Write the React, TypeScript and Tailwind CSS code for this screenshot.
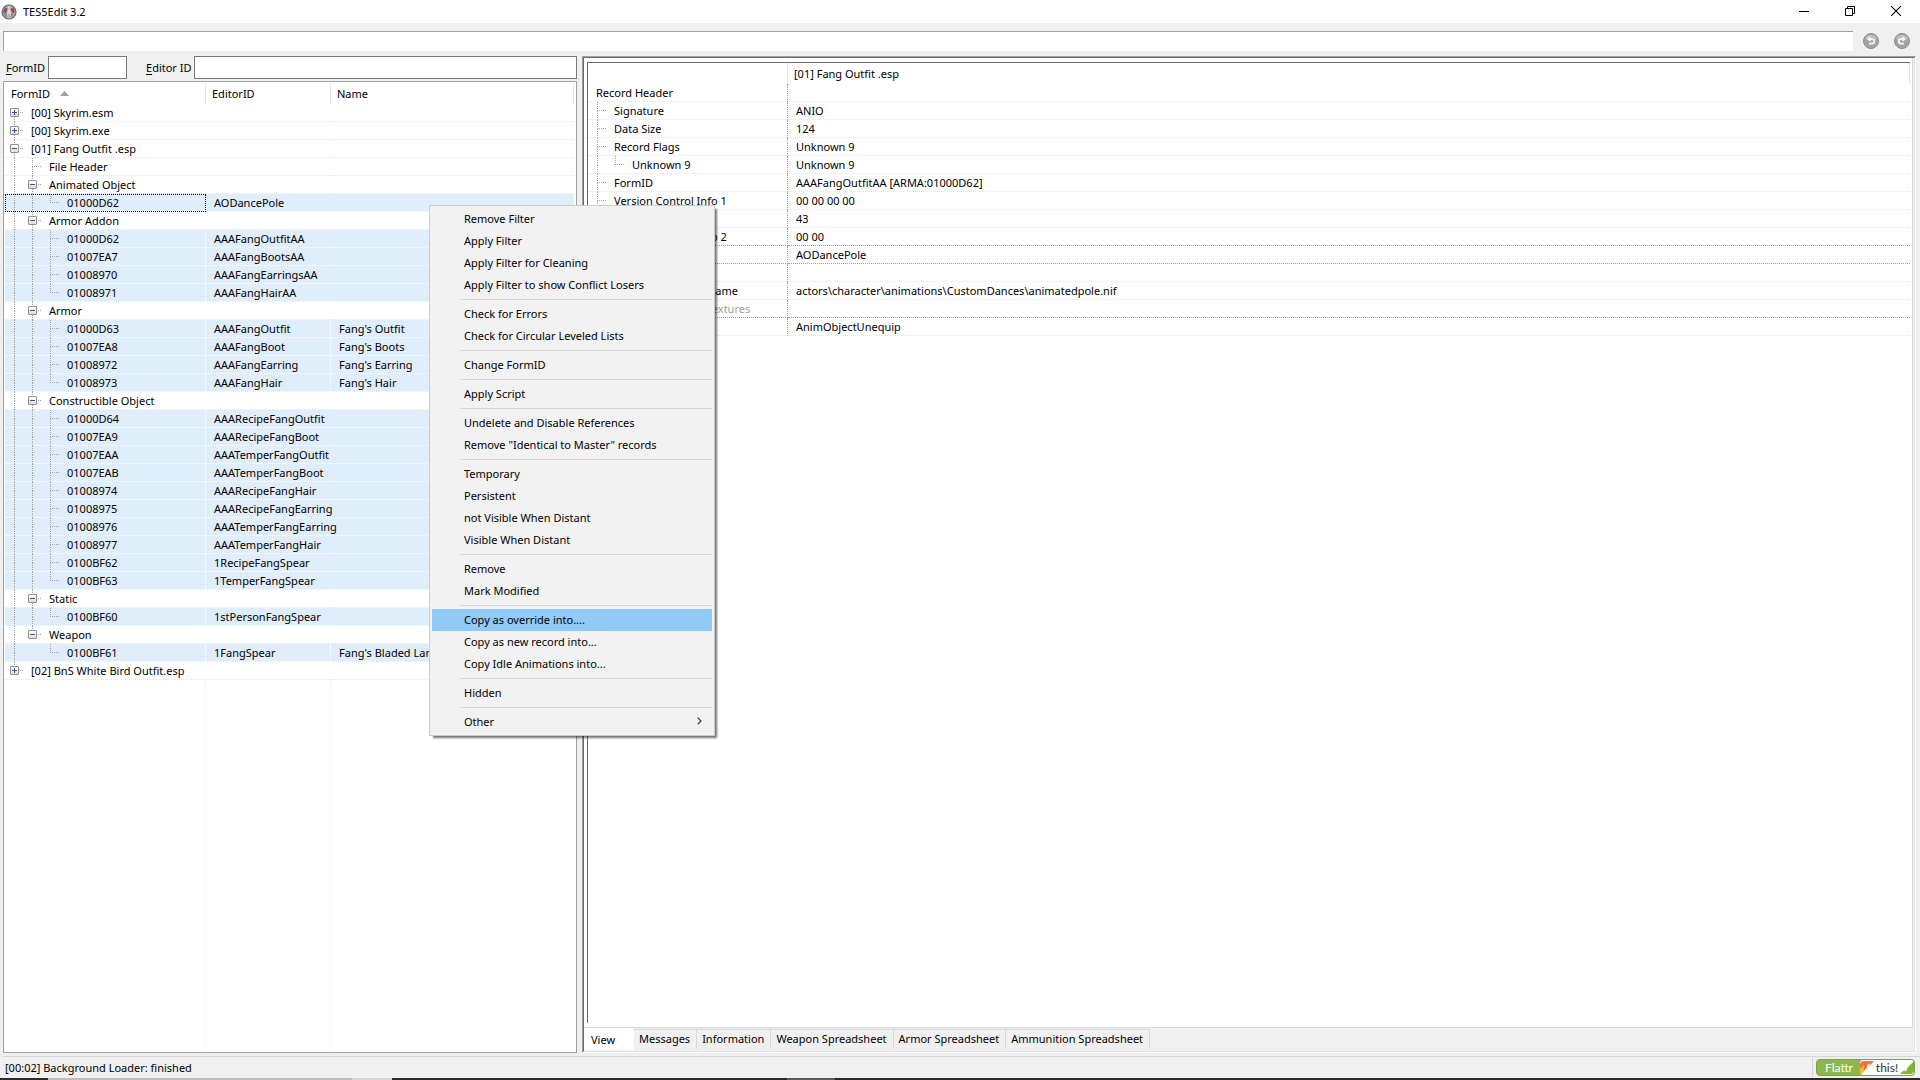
import React from 'react';

type Guide = 'line' | 'first' | 'branch' | 'end' | 'none';

type TreeItem = {
  label: string;
  guides: Guide[];
  toggle?: 'plus' | 'minus';
  editorId?: string;
  name?: string;
  focused?: boolean;
};

type Group = { label: string; records: string[][] };

const groups: Group[] = [
  { label: 'Animated Object', records: [['01000D62', 'AODancePole']] },
  {
    label: 'Armor Addon',
    records: [
      ['01000D62', 'AAAFangOutfitAA'],
      ['01007EA7', 'AAAFangBootsAA'],
      ['01008970', 'AAAFangEarringsAA'],
      ['01008971', 'AAAFangHairAA'],
    ],
  },
  {
    label: 'Armor',
    records: [
      ['01000D63', 'AAAFangOutfit', "Fang's Outfit"],
      ['01007EA8', 'AAAFangBoot', "Fang's Boots"],
      ['01008972', 'AAAFangEarring', "Fang's Earring"],
      ['01008973', 'AAAFangHair', "Fang's Hair"],
    ],
  },
  {
    label: 'Constructible Object',
    records: [
      ['01000D64', 'AAARecipeFangOutfit'],
      ['01007EA9', 'AAARecipeFangBoot'],
      ['01007EAA', 'AAATemperFangOutfit'],
      ['01007EAB', 'AAATemperFangBoot'],
      ['01008974', 'AAARecipeFangHair'],
      ['01008975', 'AAARecipeFangEarring'],
      ['01008976', 'AAATemperFangEarring'],
      ['01008977', 'AAATemperFangHair'],
      ['0100BF62', '1RecipeFangSpear'],
      ['0100BF63', '1TemperFangSpear'],
    ],
  },
  { label: 'Static', records: [['0100BF60', '1stPersonFangSpear']] },
  { label: 'Weapon', records: [['0100BF61', '1FangSpear', "Fang's Bladed Lance"]] },
];

const treeItems: TreeItem[] = [
  { label: '[00] Skyrim.esm', guides: ['first'], toggle: 'plus' },
  { label: '[00] Skyrim.exe', guides: ['branch'], toggle: 'plus' },
  { label: '[01] Fang Outfit .esp', guides: ['branch'], toggle: 'minus' },
  { label: 'File Header', guides: ['line', 'branch'] },
  ...groups.flatMap((group, g) => {
    const lastGroup = g === groups.length - 1;
    const head: TreeItem = {
      label: group.label,
      guides: ['line', lastGroup ? 'end' : 'branch'],
      toggle: 'minus',
    };
    const rows = group.records.map(([label, editorId, name], r): TreeItem => ({
      label,
      editorId,
      name,
      focused: g === 0,
      guides: [
        'line',
        lastGroup ? 'none' : 'line',
        r === group.records.length - 1 ? 'end' : 'branch',
      ],
    }));
    return [head, ...rows];
  }),
  { label: '[02] BnS White Bird Outfit.esp', guides: ['end'], toggle: 'plus' },
];

type RecordRow = {
  label: string;
  value: string;
  guides: Guide[];
  section?: boolean;
  muted?: boolean;
};

const recordRows: RecordRow[] = [
  { label: 'Record Header', value: '', guides: [] },
  { label: 'Signature', value: 'ANIO', guides: ['branch'] },
  { label: 'Data Size', value: '124', guides: ['branch'] },
  { label: 'Record Flags', value: 'Unknown 9', guides: ['branch'] },
  { label: 'Unknown 9', value: 'Unknown 9', guides: ['line', 'end'] },
  { label: 'FormID', value: 'AAAFangOutfitAA [ARMA:01000D62]', guides: ['branch'] },
  { label: 'Version Control Info 1', value: '00 00 00 00', guides: ['branch'] },
  { label: 'Form Version', value: '43', guides: ['branch'] },
  { label: 'Version Control Info 2', value: '00 00', guides: ['end'], section: true },
  { label: 'EDID - Editor ID', value: 'AODancePole', guides: [], section: true },
  { label: 'Model', value: '', guides: [] },
  {
    label: 'MODL - Model Filename',
    value: 'actors\\character\\animations\\CustomDances\\animatedpole.nif',
    guides: ['branch'],
  },
  { label: 'MODS - Alternate Textures', value: '', guides: ['end'], section: true, muted: true },
  { label: 'BNAM - Unload Event', value: 'AnimObjectUnequip', guides: [] },
];

const menuSections = [
  ['Remove Filter', 'Apply Filter', 'Apply Filter for Cleaning', 'Apply Filter to show Conflict Losers'],
  ['Check for Errors', 'Check for Circular Leveled Lists'],
  ['Change FormID'],
  ['Apply Script'],
  ['Undelete and Disable References', 'Remove "Identical to Master" records'],
  ['Temporary', 'Persistent', 'not Visible When Distant', 'Visible When Distant'],
  ['Remove', 'Mark Modified'],
  ['Copy as override into....', 'Copy as new record into...', 'Copy Idle Animations into...'],
  ['Hidden'],
  ['Other'],
];

const tabs = ['Messages', 'Information', 'Weapon Spreadsheet', 'Armor Spreadsheet', 'Ammunition Spreadsheet'];

const AppIcon = () => (
  <svg width="16" height="16" viewBox="0 0 16 16">
    <circle cx="8" cy="8" r="7.6" fill="#66696c" />
    <circle cx="8" cy="8" r="6.4" fill="#a3a9ad" />
    <path d="M2.2 7 4 3.6l2 .6-.4 4.4-2.8.6z" fill="#b8433c" />
    <path d="M10.4 4.2 12.4 3.8 13.9 7l-.8 2-2.4-.6z" fill="#b8433c" />
    <path d="M3 9.4l2.8-.4.8 3.8-1.4.4z" fill="#6f8fae" />
    <path d="M13 9.4l-2.8-.4-.8 3.8 1.4.4z" fill="#6f8fae" />
    <path d="M5.2 5.2l1.400 1M10.8 5.2l-1.400 1" stroke="#2d5f9a" strokeWidth="1.2" />
    <circle cx="8" cy="3.6" r="1.4" fill="#ead9b8" />
    <path d="M6.6 5.4h2.8l.5 4.2-.7 4.400H6.8l-.7-4.400z" fill="#e6e1d2" />
    <path d="M8 9.500v4.500" stroke="#6b6f73" strokeWidth=".8" />
  </svg>
);

const NavIcon = ({ flip }: { flip?: boolean }) => (
  <svg width="16" height="16" viewBox="0 0 16 16" className={flip ? '-scale-x-100' : ''}>
    <circle cx="8" cy="8" r="7.5" fill="#a3a3a3" stroke="#8f8f8f" />
    <path d="M2 6a6.4 6.4 0 0 1 12 0c-3 1.8-8 1.6-12 0z" fill="#bdbdbd" />
    <path d="M7.5 3v2.2h1.6a3 3 0 0 1 0 6.3H6V9.7h3a1.3 1.3 0 0 0 0-2.7H7.5v2L4 6z" fill="#f4f4f4" />
  </svg>
);

const TitleBar = () => (
  <header className="flex h-[23px] items-center bg-white px-px">
    <AppIcon />
    <h1 className="ml-1.5 flex-1 text-[11px]">TES5Edit 3.2</h1>
    <button aria-label="Minimize" className="flex h-full w-[46px] items-center justify-center pb-0.5">
      <svg width="10" height="10" viewBox="0 0 10 10">
        <path d="M0 5.5h10" stroke="#000" />
      </svg>
    </button>
    <button aria-label="Restore" className="flex h-full w-[46px] items-center justify-center pb-0.5">
      <svg width="10" height="10" viewBox="0 0 10 10" fill="none" stroke="#000">
        <path d="M.5 2.5h7v7h-7zM2.5 2.5v-2h7v7h-2" />
      </svg>
    </button>
    <button aria-label="Close" className="flex h-full w-[46px] items-center justify-center pb-0.5">
      <svg width="10" height="10" viewBox="0 0 10 10">
        <path d="M0 0l10 10M10 0L0 10" stroke="#000" strokeWidth="1.1" />
      </svg>
    </button>
  </header>
);

const GuideSegment = ({ kind, toggle }: { kind: Guide; toggle?: 'plus' | 'minus' }) => {
  const node = kind === 'first' || kind === 'branch' || kind === 'end';
  const above = kind !== 'first' && kind !== 'none';
  const below = kind === 'line' || kind === 'branch' || kind === 'first';
  return (
    <span className="relative flex h-[18px] w-[18px] shrink-0 flex-col pl-[9px]">
      <span
        className={`h-[9px] border-dotted border-[#a0a0a0] ${above ? 'border-l' : ''} ${node ? 'border-b' : ''}`}
      />
      <span className={`h-[9px] border-dotted border-[#a0a0a0] ${below ? 'border-l' : ''}`} />
      {toggle && (
        <button
          aria-label={toggle === 'plus' ? 'Expand' : 'Collapse'}
          className="absolute left-[5px] top-1 flex size-[9px] items-center justify-center rounded-[1px] border border-[#919191] bg-linear-to-b from-white to-[#dedede]"
        >
          <svg width="5" height="5" viewBox="0 0 5 5" stroke="#33539c">
            <path d={toggle === 'plus' ? 'M0 2.5h5M2.5 0v5' : 'M0 2.5h5'} />
          </svg>
        </button>
      )}
    </span>
  );
};

const FilterBar = () => (
  <div className="mt-[5px] flex h-[23px] items-center pl-[3px]">
    <label htmlFor="form-id" className="w-[42px]">
      <u className="underline-offset-2">F</u>ormID
    </label>
    <input id="form-id" className="h-full w-[79px] border border-[#7a7a7a] bg-white px-1" />
    <label htmlFor="editor-id" className="ml-[19px] w-12">
      <u className="underline-offset-2">E</u>ditor ID
    </label>
    <input id="editor-id" className="h-full min-w-0 flex-1 border border-[#7a7a7a] bg-white px-1" />
  </div>
);

const TreeRow = ({ item }: { item: TreeItem }) => {
  const selected = item.editorId !== undefined;
  const line = selected ? 'border-white bg-[#e0edfa]' : 'border-[#e6e6e6]';
  return (
    <tr className="h-[18px]">
      <td
        className={`h-[18px] border-b border-dotted p-0 ${line} ${selected && !item.focused ? 'border-r' : ''} ${item.focused ? 'outline-1 -outline-offset-1 outline-dotted outline-black' : ''}`}
      >
        <div className="flex h-[17px] items-center whitespace-nowrap">
          {item.guides.map((kind, i) => (
            <GuideSegment key={i} kind={kind} toggle={i === item.guides.length - 1 ? item.toggle : undefined} />
          ))}
          <span className="pl-2">{item.label}</span>
        </div>
      </td>
      <td className={`h-[18px] border-b border-dotted p-0 pl-2 whitespace-nowrap ${line} ${item.name ? 'border-r' : ''}`}>
        {item.editorId}
      </td>
      <td className={`h-[18px] border-b border-dotted p-0 pl-2 whitespace-nowrap ${line}`}>{item.name}</td>
    </tr>
  );
};

const NavigationTree = () => (
  <section className="mt-0.5 flex flex-1 flex-col border border-[#a0a0a0] bg-white pl-px pr-0.5 pt-px">
    <table className="w-full table-fixed border-separate border-spacing-0">
      <colgroup>
        <col className="w-[201px]" />
        <col className="w-[125px]" />
        <col />
      </colgroup>
      <thead>
        <tr className="h-[21px] text-left">
          <th className="border-r border-[#e5e5e5] p-0 pl-1.5 font-normal">
            <span className="flex items-center">
              FormID
              <svg width="9" height="5" viewBox="0 0 9 5" className="ml-2.5">
                <path d="M4.5 0 9 5H0z" fill="#a0a0a0" />
              </svg>
            </span>
          </th>
          <th className="border-r border-[#e5e5e5] p-0 pl-1.5 font-normal">EditorID</th>
          <th className="border-r border-[#e5e5e5] p-0 pl-1.5 font-normal">Name</th>
        </tr>
      </thead>
      <tbody>
        {treeItems.map((item, i) => (
          <TreeRow key={i} item={item} />
        ))}
      </tbody>
    </table>
    <div className="flex flex-1">
      <div className="w-[201px] border-r border-dotted border-[#f0f0f0]" />
      <div className="w-[125px] border-r border-dotted border-[#f0f0f0]" />
    </div>
  </section>
);

const RecordTable = () => (
  <table className="w-full table-fixed border-separate border-spacing-0">
    <colgroup>
      <col className="w-[200px]" />
      <col />
    </colgroup>
    <thead>
      <tr className="h-[21px] text-left">
        <th className="border-r border-[#e5e5e5] p-0" />
        <th className="border-r border-[#e5e5e5] p-0 pl-1.5 font-normal">[01] Fang Outfit .esp</th>
      </tr>
    </thead>
    <tbody>
      {recordRows.map((row) => {
        const line = row.section ? 'border-b-[#a0a0a0]' : 'border-b-[#e6e6e6]';
        return (
          <tr key={row.label} className="h-[18px]">
            <td className={`h-[18px] border-r border-b border-dotted border-r-[#a0a0a0] p-0 ${line}`}>
              <div className="flex h-[17px] items-center whitespace-nowrap">
                {row.guides.map((kind, i) => (
                  <GuideSegment key={i} kind={kind} />
                ))}
                <span className={`pl-2 ${row.muted ? 'text-[#a0a0a0]' : ''}`}>{row.label}</span>
              </div>
            </td>
            <td className={`h-[18px] border-b border-dotted p-0 pl-2 whitespace-nowrap ${line}`}>{row.value}</td>
          </tr>
        );
      })}
    </tbody>
  </table>
);

const RecordPanel = () => (
  <section className="mr-1 ml-[3px] mt-[5px] flex min-w-0 flex-1 flex-col border border-t-[#a0a0a0] border-l-[#a0a0a0] border-r-white border-b-white">
    <div className="flex flex-1 flex-col border border-t-[#696969] border-l-[#696969] border-r-[#e3e3e3] border-b-[#e3e3e3]">
      <div className="mr-px flex flex-1 flex-col border-r border-b border-[#d9d9d9] bg-white pt-1 pr-0.5 pb-1 pl-[3px]">
        <div className="flex-1 border-t border-l border-[#696969]">
          <RecordTable />
        </div>
      </div>
      <div role="tablist" className="flex h-[23px] items-start">
        <button role="tab" aria-selected="true" className="h-[22px] w-[50px] bg-white pl-[7px] text-left">
          View
        </button>
        {tabs.map((tab) => (
          <button
            key={tab}
            role="tab"
            aria-selected="false"
            className="mt-px h-5 border-t border-r border-[#d9d9d9] pr-1.5 pb-0.5 pl-[5px]"
          >
            {tab}
          </button>
        ))}
      </div>
    </div>
  </section>
);

const ContextMenu = () => (
  <div
    role="menu"
    className="absolute left-[429px] top-[205px] w-[286px] border border-[#cccccc] bg-[#f2f2f2] p-0.5 shadow-[3px_3px_2px_-1px_rgba(0,0,0,0.55)]"
  >
    {menuSections.map((section, s) => (
      <React.Fragment key={s}>
        {s > 0 && <hr className="my-[3px] ml-7 border-t border-[#d7d7d7]" />}
        {section.map((label) => (
          <button
            key={label}
            role="menuitem"
            className={`flex h-[22px] w-full items-center pr-2.5 pb-0.5 pl-8 text-left ${label.startsWith('Copy as override') ? 'bg-[#91c9f7]' : ''}`}
          >
            <span className="flex-1">{label}</span>
            {label === 'Other' && (
              <svg width="5" height="8" viewBox="0 0 5 8" fill="none" stroke="#333" strokeWidth="1.2">
                <path d="M.6.6 4 4 .6 7.4" />
              </svg>
            )}
          </button>
        ))}
      </React.Fragment>
    ))}
  </div>
);

const FlattrBadge = () => (
  <a
    href="#flattr"
    className="flex h-[17px] w-[99px] items-center overflow-hidden rounded-[4px] border border-[#7fa046] bg-[#8bb950] font-['Lato',sans-serif] text-[12px] leading-[15px]"
  >
    <span className="w-[43px] pl-2 text-white">Flattr</span>
    <span className="flex h-full flex-1 items-center justify-between rounded-[3px] bg-white text-[#333]">
      <svg width="14" height="15" viewBox="0 0 14 15">
        <path d="M0 15V5q0-4 4-4h10L9.5 6V3.8Q7 4 6.8 8z" fill="#f0762b" />
        <path d="M0 15V8l4-3v6z" fill="#f9b233" />
      </svg>
      this!
      <svg width="14" height="15" viewBox="0 0 14 15">
        <path d="M14 1v9q0 4-4 4H0l4.500-4.500v2Q7 11.5 7.2 8z" fill="#7fb53c" />
      </svg>
    </span>
  </a>
);

const StatusBar = () => (
  <footer className="mt-[3px] ml-[3px] flex h-[22px] border-t border-[#d7d7d7]">
    <p className="flex flex-1 items-center pl-0.5">[00:02] Background Loader: finished</p>
    <div className="my-px flex items-center border-l border-[#d7d7d7] pr-[5px] pl-[3px]">
      <FlattrBadge />
    </div>
  </footer>
);

const App = () => (
  <div className="relative flex min-h-screen flex-col bg-[#f0f0f0] font-['Noto_Sans',sans-serif] text-[11px] leading-[17px] text-black">
    <TitleBar />
    <div className="mt-2 flex h-5 items-center pl-[3px]">
      <input aria-label="Path" className="h-full min-w-0 flex-1 border-t border-l border-[#a0a0a0] bg-white px-1" />
      <button aria-label="Back" className="ml-2.5">
        <NavIcon />
      </button>
      <button aria-label="Forward" className="mr-2.5 ml-[15px]">
        <NavIcon flip />
      </button>
    </div>
    <main className="flex flex-1">
      <div className="ml-[3px] flex w-[30%] flex-col pr-0.5">
        <FilterBar />
        <NavigationTree />
      </div>
      <RecordPanel />
    </main>
    <StatusBar />
    <div className="flex h-0.5 bg-[#2b2b2b]">
      <div className="ml-12 w-[304px] bg-[#bdbdbd]" />
      <div className="w-10 bg-[#d4d4d4]" />
      <div className="ml-[395px] w-12 bg-[#5a5a5a]" />
    </div>
    <ContextMenu />
  </div>
);

export default App;
